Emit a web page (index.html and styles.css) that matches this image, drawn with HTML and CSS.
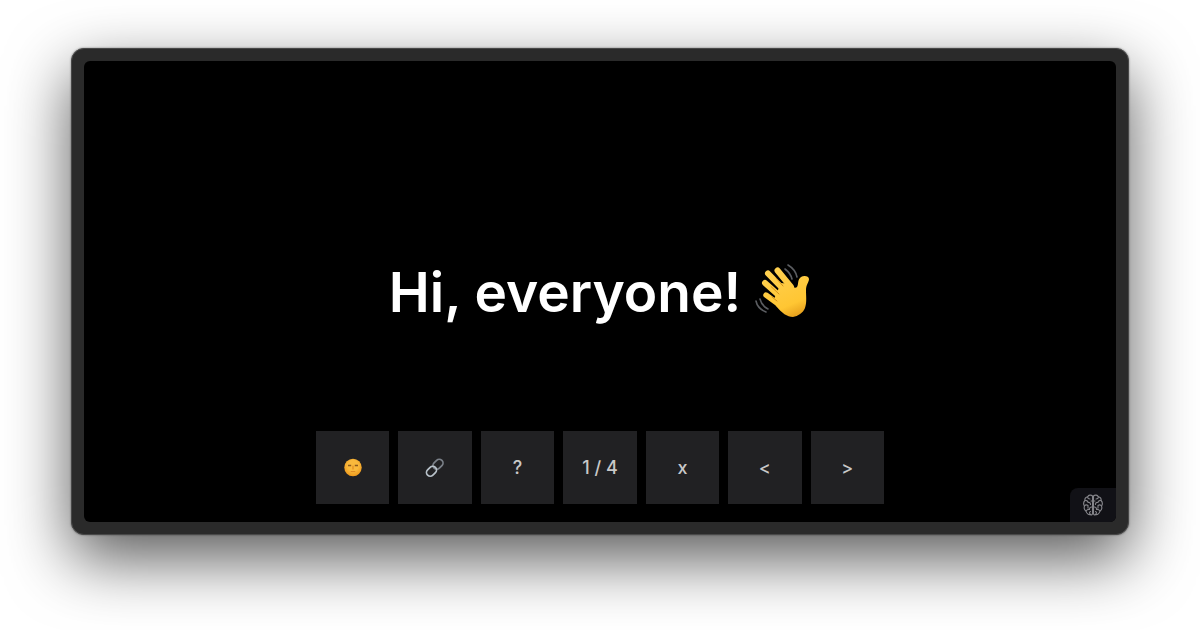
FILE: index.html
```
<!DOCTYPE html>
<html lang="en">
<head>
<meta charset="utf-8">
<title>Hi, everyone!</title>
<link rel="stylesheet" href="styles.css">
</head>
<body>
<main class="window">
  <section class="slide">
    <h1 class="title">
      <span>Hi, everyone!</span>
      <svg class="wave" viewBox="0 0 56 56" role="img" aria-label="Waving hand">
        <defs>
          <linearGradient id="skin" gradientUnits="userSpaceOnUse" x1="20" y1="5" x2="42" y2="56">
            <stop offset="0" stop-color="#ffd04f"/>
            <stop offset="0.7" stop-color="#ffc633"/>
            <stop offset="1" stop-color="#df9516"/>
          </linearGradient>
        </defs>
        <g fill="none" stroke="url(#skin)" stroke-linecap="round">
          <path d="M22.500 6.500L36 23" stroke-width="6"/>
          <path d="M13 9.500L32 29" stroke-width="6"/>
          <path d="M10 19L28 35" stroke-width="6"/>
          <path d="M11 31L26 42" stroke-width="5.400"/>
        </g>
        <path d="M26 19L35 20C38 23 40 25 42 23C44 20 42 16 46 13C49 11 54 12 54 15C54 18 51 21 51 26C51 33 52 38 50 44C48 49 43 52 38 53C32 53 27 49 21 42L19 35Z" fill="url(#skin)"/>
        <g fill="none" stroke="#c98310" stroke-width="0.800" stroke-linecap="round">
          <path d="M21 14L28 22M16 22.500L24 30M17 33L22 37"/>
        </g>
        <g fill="none" stroke="#5b5d61" stroke-width="1.600" stroke-linecap="round">
          <path d="M30 5C34 8 36 11 37 15M33 1C38 4 41 8 42 13M5 35C6 39 9 43 13 45M1 37C2 42 6 46 11 48"/>
        </g>
      </svg>
    </h1>
    <nav class="controls" aria-label="Slide controls">
      <button class="control" type="button" aria-label="Theme">
        <svg class="glyph" viewBox="0 0 20 20">
          <defs>
            <radialGradient id="sun" cx="0.5" cy="0.4" r="0.6">
              <stop offset="0.5" stop-color="#f9b93c"/>
              <stop offset="1" stop-color="#ee991c"/>
            </radialGradient>
          </defs>
          <circle cx="10" cy="9.500" r="8.700" fill="url(#sun)"/>
          <path d="M5 7.500H8.200M11.800 7.500H15" fill="none" stroke="#8d5a1c" stroke-width="1.500"/>
          <path d="M10 8V11M8.200 13.500H11.800" fill="none" stroke="#df8b24" stroke-width="1.200" stroke-linecap="round"/>
        </svg>
      </button>
      <button class="control" type="button" aria-label="Copy link">
        <svg class="glyph" viewBox="0 0 20 20">
          <g fill="none" stroke-width="1.700">
            <rect x="7.500" y="2.500" width="11" height="7.500" rx="3.700" transform="rotate(-45 13 6.250)" stroke="#7b8189"/>
            <rect x="1" y="9.500" width="11" height="7.500" rx="3.700" transform="rotate(-45 6.500 13.250)" stroke="#b8c2ca"/>
          </g>
        </svg>
      </button>
      <button class="control" type="button">?</button>
      <button class="control" type="button">1 / 4</button>
      <button class="control" type="button">x</button>
      <button class="control" type="button">&lt;</button>
      <button class="control" type="button">&gt;</button>
    </nav>
    <a class="badge" href="#" aria-label="Brain">
      <svg class="brain" viewBox="0 0 20 22" fill="none" stroke="#85858a" stroke-width="1.100" stroke-linecap="round" stroke-linejoin="round">
        <path d="M9.500 2C8 0.500 5.500 1 4.700 2.700C2.500 3 1.500 5 2 6.500C0.500 8 0.500 10.500 1.500 12C0.800 14 1.500 16 3 17C3.500 19.500 5.500 21 7.500 20.500C8.500 21.500 9.500 20.500 9.500 19.500Z"/>
        <path d="M10.500 2C12 0.500 14.500 1 15.300 2.700C17.500 3 18.500 5 18 6.500C19.500 8 19.500 10.500 18.500 12C19.200 14 18.500 16 17 17C16.500 19.500 14.500 21 12.500 20.500C11.500 21.500 10.500 20.500 10.500 19.500Z"/>
        <path d="M4.700 2.700Q4.500 5 7 5M2 6.500Q4.500 6 5 8.500Q7.500 8 7.500 10.500M1.500 12Q3 10 5 11.500V14M9.500 13Q6.500 12.500 6.500 15.500Q4.500 15 3 17M7.500 20.500Q5.500 18.500 7.500 17.500M9.500 7H8"/>
        <path d="M15.300 2.700Q15.500 5 13 5M18 6.500Q15.500 6 15 8.500Q12.500 8 12.500 10.500M18.500 12Q17 10 15 11.500V14M10.500 13Q13.500 12.500 13.500 15.500Q15.500 15 17 17M12.500 20.500Q14.500 18.500 12.500 17.500M10.500 7H12"/>
      </svg>
    </a>
  </section>
</main>
</body>
</html>
```

FILE: styles.css
```
* {
  box-sizing: border-box;
}

body {
  display: flex;
  min-height: 100vh;
  margin: 0;
  padding: 48px 71px 95px;
  background: #fff;
  color: #fff;
  font-family: Inter, "Liberation Sans", sans-serif;
}

.window {
  display: flex;
  flex: 1;
  padding: 12px;
  border: 1px solid #484848;
  border-radius: 13px;
  background: #2a2a2a;
  box-shadow: 0 24px 64px rgba(0, 0, 0, 0.65), 0 0 2px rgba(0, 0, 0, 0.5);
}

.slide {
  position: relative;
  display: grid;
  flex: 1;
  grid-template-rows: 1fr auto 1fr;
  justify-items: center;
  padding: 18px;
  border-radius: 6px;
  background: #000;
  overflow: hidden;
}

.title {
  display: flex;
  grid-row: 2;
  align-items: center;
  gap: 14px;
  margin: 0;
  font-size: 55px;
  font-weight: 600;
  line-height: 68px;
}

.wave {
  width: 56px;
  height: 56px;
}

.controls {
  display: grid;
  grid-row: 3;
  grid-template-columns: repeat(7, 1fr);
  gap: 9px;
  align-self: end;
  width: 100%;
  max-width: 568px;
}

.control {
  display: flex;
  align-items: center;
  justify-content: center;
  height: 73px;
  padding: 0;
  border: 0;
  background: #212123;
  color: #c8c8c8;
  font: 500 18px/24px Inter, "Liberation Sans", sans-serif;
  cursor: pointer;
}

.glyph {
  width: 20px;
  height: 20px;
}

.badge {
  position: absolute;
  right: 0;
  bottom: 0;
  display: flex;
  align-items: center;
  justify-content: center;
  width: 46px;
  height: 34px;
  border-top-left-radius: 8px;
  background: #111116;
}

.brain {
  width: 20px;
  height: 22px;
}
```
